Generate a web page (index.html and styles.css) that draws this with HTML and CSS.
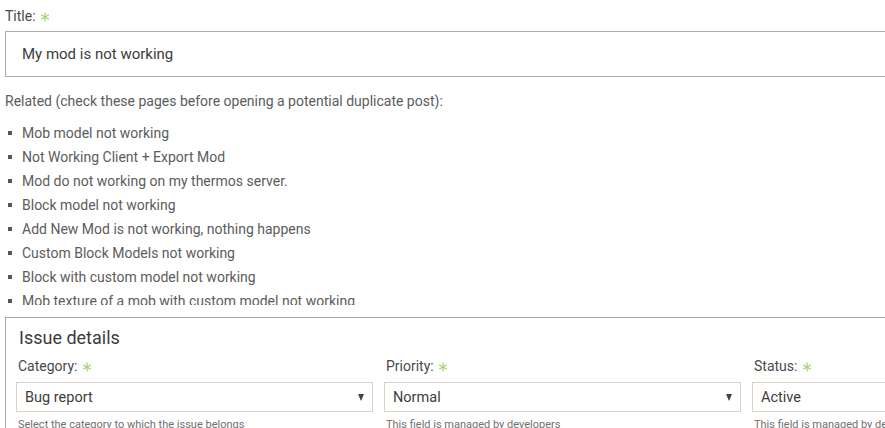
FILE: index.html
```html
<!DOCTYPE html>
<html lang="en">
<head>
  <meta charset="UTF-8">
  <title>New issue</title>
  <link rel="stylesheet" href="styles.css">
</head>
<body>
  <div class="page">
    <div class="field">
      <label class="label">Title: <svg class="req" viewBox="0 0 10 10"><path d="M5 0.5V9.5M1.1 2.75L8.9 7.25M1.1 7.25L8.9 2.75"/></svg></label>
      <div class="title-input">My mod is not working</div>
    </div>

    <p class="related-title">Related (check these pages before opening a potential duplicate post):</p>
    <ul class="related">
      <li>Mob model not working</li>
      <li>Not Working Client + Export Mod</li>
      <li>Mod do not working on my thermos server.</li>
      <li>Block model not working</li>
      <li>Add New Mod is not working, nothing happens</li>
      <li>Custom Block Models not working</li>
      <li>Block with custom model not working</li>
      <li>Mob texture of a mob with custom model not working</li>
      <li>Model not working in game</li>
    </ul>

    <div class="issue-box">
      <h2>Issue details</h2>
      <div class="issue-grid">
        <div class="col">
          <label class="label">Category: <svg class="req" viewBox="0 0 10 10"><path d="M5 0.5V9.5M1.1 2.75L8.9 7.25M1.1 7.25L8.9 2.75"/></svg></label>
          <div class="select"><span>Bug report</span><i class="arrow"></i></div>
          <div class="help">Select the category to which the issue belongs</div>
        </div>
        <div class="col">
          <label class="label">Priority: <svg class="req" viewBox="0 0 10 10"><path d="M5 0.5V9.5M1.1 2.75L8.9 7.25M1.1 7.25L8.9 2.75"/></svg></label>
          <div class="select"><span>Normal</span><i class="arrow"></i></div>
          <div class="help">This field is managed by developers</div>
        </div>
        <div class="col">
          <label class="label">Status: <svg class="req" viewBox="0 0 10 10"><path d="M5 0.5V9.5M1.1 2.75L8.9 7.25M1.1 7.25L8.9 2.75"/></svg></label>
          <div class="select"><span>Active</span><i class="arrow"></i></div>
          <div class="help">This field is managed by developers</div>
        </div>
      </div>
    </div>
  </div>
</body>
</html>
```

FILE: styles.css
```css
body {
  margin: 0;
  padding: 0;
  font-family: Roboto, "Liberation Sans", sans-serif;
  font-size: 14px;
  color: #5c5c5c;
  background: #fff;
  overflow: hidden;
}

.page {
  width: 1130px;
  padding: 6px 0 0 5px;
}

.label {
  display: block;
  line-height: 20px;
  color: #4a4a4a;
}

.req {
  width: 10px;
  height: 10px;
  vertical-align: -1px;
  margin-left: 1px;
}

.req path {
  stroke: #a5d273;
  stroke-width: 1.2;
  fill: none;
}

.title-input {
  margin-top: 5px;
  height: 44px;
  line-height: 44px;
  border: 1px solid #aaa;
  border-right: none;
  padding-left: 16px;
  font-size: 15px;
  color: #3c3c3c;
}

.related-title {
  margin: 14px 0 0;
  line-height: 20px;
}

.related {
  list-style: none;
  margin: 10px 0 0;
  padding: 0;
  height: 184px;
  overflow: hidden;
}

.related li {
  line-height: 24px;
  padding-left: 17px;
  position: relative;
}

.related li::before {
  content: "";
  position: absolute;
  left: 3px;
  top: 10px;
  width: 4px;
  height: 4px;
  background: #555;
}

.issue-box {
  margin-top: 12px;
  border: 1px solid #aaa;
  border-right: none;
  padding: 8px 0 20px 10px;
}

.issue-box h2 {
  margin: 0 0 6px 3px;
  font-size: 18px;
  font-weight: normal;
  line-height: 24px;
  color: #3c3c3c;
}

.issue-grid {
  display: grid;
  grid-template-columns: 357px 357px 358px;
  column-gap: 11px;
}

.col .label {
  padding-left: 2px;
}

.select {
  margin-top: 6px;
  height: 28px;
  border: 1px solid #ddd3c4;
  display: flex;
  align-items: center;
  justify-content: space-between;
  padding: 0 8px 0 8px;
  font-size: 14.5px;
  color: #3c3c3c;
}

.arrow {
  width: 0;
  height: 0;
  border-left: 3.5px solid transparent;
  border-right: 3.5px solid transparent;
  border-top: 7px solid #444;
}

.help {
  margin-top: 6px;
  padding-left: 2px;
  font-size: 11px;
  color: #707070;
}
```
